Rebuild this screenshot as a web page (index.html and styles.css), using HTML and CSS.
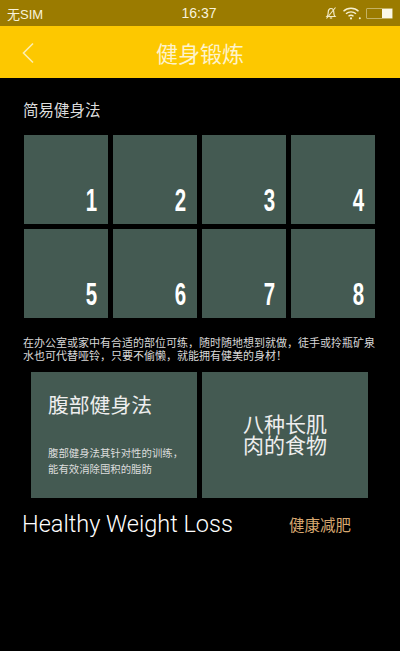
FILE: index.html
```html
<!DOCTYPE html>
<html lang="zh">
<head>
<meta charset="utf-8">
<title>健身锻炼</title>
<link rel="stylesheet" href="styles.css">
</head>
<body>
<div class="status">
  <span class="carrier">无SIM</span>
  <span class="time">16:37</span>
  <span class="status-icons">
    <svg class="ic-bell" viewBox="0 0 14 14" width="14" height="14"><path d="M3 10.500c1-1 1.200-2.500 1.200-4C4.200 4 5.400 2.500 7 2.500S9.800 4 9.800 6.500c0 1.500.2 3 1.200 4z" fill="none" stroke="#f3ecc8" stroke-width="1.200"/><path d="M5.800 12h2.400" stroke="#f3ecc8" stroke-width="1.200"/><path d="M2.500 12.500 11.500 1.500" stroke="#f3ecc8" stroke-width="1.100"/></svg>
    <svg class="ic-wifi" viewBox="0 0 20 14" width="20" height="14"><path d="M1.500 5.200C5.500 1.300 12.500 1.300 16.500 5.200M4 7.800c2.800-2.600 7.200-2.600 10 0M6.500 10.200c1.500-1.200 3.500-1.200 5 0" fill="none" stroke="#f6f0d0" stroke-width="1.400"/><circle cx="9" cy="12.400" r="1.100" fill="#f6f0d0"/><circle cx="17.800" cy="12.200" r="1" fill="#f6f0d0"/></svg>
    <span class="battery"><span class="battery-fill"></span></span>
  </span>
</div>
<header class="bar">
  <svg class="back" viewBox="0 0 14 22" width="14" height="22"><path d="M12 1.500 2.500 11 12 20.500" fill="none" stroke="#fbeeb0" stroke-width="1.600"/></svg>
  <h1>健身锻炼</h1>
</header>
<main class="page">
  <h2 class="section">简易健身法</h2>
  <div class="tiles">
    <div class="tile"><span class="num">1</span></div><div class="tile"><span class="num">2</span></div><div class="tile"><span class="num">3</span></div><div class="tile"><span class="num">4</span></div>
    <div class="tile"><span class="num">5</span></div><div class="tile"><span class="num">6</span></div><div class="tile"><span class="num">7</span></div><div class="tile"><span class="num">8</span></div>
  </div>
  <p class="intro">在办公室或家中有合适的部位可练，随时随地想到就做，徒手或拎瓶矿泉水也可代替哑铃，只要不偷懒，就能拥有健美的身材！</p>
  <div class="cards">
    <div class="card card-left">
      <h3>腹部健身法</h3>
      <p>腹部健身法其针对性的训练，能有效消除囤积的脂肪</p>
    </div>
    <div class="card card-right">八种长肌肉的食物</div>
  </div>
  <div class="foot">
    <span class="foot-en">Healthy Weight Loss</span>
    <span class="foot-cn">健康减肥</span>
  </div>
</main>
</body>
</html>
```
FILE: styles.css
```css
* { box-sizing: border-box; }
html, body { margin: 0; padding: 0; }
body {
  width: 400px;
  height: 651px;
  overflow: hidden;
  background: #000;
  color: #eee;
  font-family: "Liberation Sans", "Noto Sans CJK SC", sans-serif;
}
.status {
  height: 26px;
  background: #9b7b00;
  color: #f8f3dc;
  display: grid;
  grid-template-columns: 1fr auto 1fr;
  align-items: center;
  padding: 0 7px 0 7px;
  font-size: 13px;
}
.time { font-size: 14px; margin-left: -2px; }
.status-icons {
  display: flex;
  align-items: center;
  justify-content: flex-end;
  gap: 4px;
}
.ic-bell { margin-right: -2px; }
.ic-wifi { margin-left: 2px; }
.battery {
  width: 27px;
  height: 11px;
  border: 1px solid #c4b264;
  border-radius: 1px;
  display: flex;
  justify-content: flex-end;
}
.battery-fill { width: 10px; background: #fbf8e8; }
.bar {
  height: 52px;
  background: #fdc800;
  display: flex;
  align-items: center;
  justify-content: center;
  position: relative;
}
.bar h1 {
  margin: 0;
  font-size: 22px;
  font-weight: 400;
  color: #fdf3cc;
}
.back { position: absolute; left: 21px; top: 16px; }
.page { padding: 23px 0 0; }
.section {
  margin: 0 0 0 23px;
  font-size: 15.500px;
  line-height: 20px;
  font-weight: 400;
  color: #ddd;
}
.tiles {
  margin: 14px 0 0 24px;
  display: grid;
  grid-template-columns: repeat(4, 84px);
  grid-auto-rows: 89px;
  gap: 5px;
}
.tile {
  background: #445a52;
  display: flex;
  justify-content: flex-end;
  align-items: flex-end;
  padding: 0 11px 5px 0;
  color: #fff;
  font-weight: 700;
  font-size: 31px;
  line-height: 36px;
}
.num {
  display: inline-block;
  transform: scaleX(0.66);
  transform-origin: right center;
}
.intro {
  margin: 19px 0 0 23px;
  width: 356px;
  font-size: 11px;
  line-height: 13px;
  color: #d8d8d8;
}
.cards {
  margin: 9px 0 0 31px;
  display: grid;
  grid-template-columns: 166px 166px;
  gap: 5px;
}
.card {
  height: 126px;
  background: #445a52;
  color: #eee;
}
.card-left { padding: 21px 10px 0 17px; }
.card-left h3 {
  margin: 0;
  font-size: 20.800px;
  line-height: 26px;
  font-weight: 400;
}
.card-left p {
  margin: 27px 0 0;
  font-size: 10.400px;
  line-height: 16px;
  color: #ddd;
}
.card-right {
  display: flex;
  align-items: center;
  justify-content: center;
  text-align: center;
  padding: 0 40px;
  font-size: 21px;
  line-height: 21px;
}
.foot {
  margin: 12px 0 0 22px;
  display: flex;
  align-items: center;
}
.foot-en {
  width: 267px;
  font-family: "Roboto", "Liberation Sans", sans-serif;
  font-weight: 300;
  font-size: 23.500px;
  line-height: 28px;
  color: #fff;
}
.foot-cn {
  font-size: 15.500px;
  color: #d8a870;
}
```
